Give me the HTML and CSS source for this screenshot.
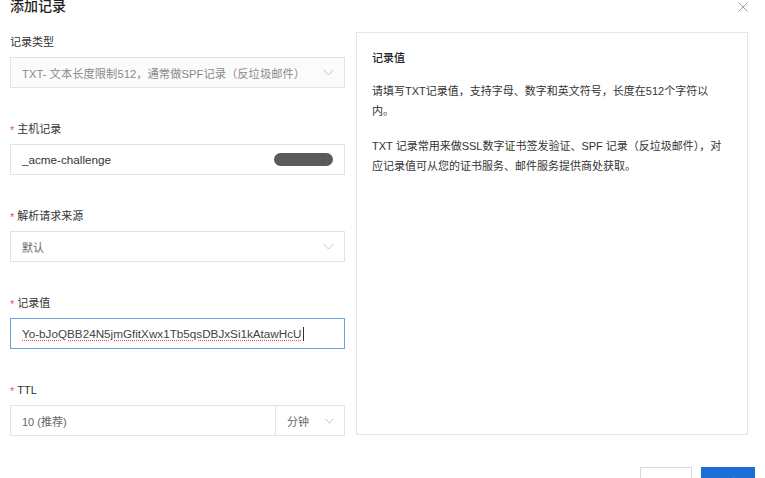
FILE: index.html
```html
<!DOCTYPE html>
<html lang="zh-CN">
<head>
<meta charset="utf-8">
<title>添加记录</title>
<link rel="stylesheet" href="styles.css">
</head>
<body>
<div class="dialog">
  <div class="header">
    <div class="title">添加记录</div>
    <svg class="close" width="10" height="10" viewBox="0 0 10 10"><path d="M0.5 0.5 L9.5 9.5 M9.5 0.5 L0.5 9.5" stroke="#a0a0a0" stroke-width="1" fill="none"/></svg>
  </div>
  <div class="content">
    <div class="form">
      <div class="field">
        <div class="label">记录类型</div>
        <div class="control select disabled">
          <span class="value muted">TXT- 文本长度限制512，通常做SPF记录（反垃圾邮件）</span>
          <svg class="chev" width="11" height="7" viewBox="0 0 11 7"><path d="M0.5 0.8 L5.5 6 L10.5 0.8" stroke="#c4c4c4" stroke-width="1" fill="none"/></svg>
        </div>
      </div>
      <div class="field">
        <div class="label"><span class="req">*</span>主机记录</div>
        <div class="control">
          <span class="value">_acme-challenge</span>
          <span class="redact"></span>
        </div>
      </div>
      <div class="field">
        <div class="label"><span class="req">*</span>解析请求来源</div>
        <div class="control select">
          <span class="value gray">默认</span>
          <svg class="chev" width="11" height="7" viewBox="0 0 11 7"><path d="M0.5 0.8 L5.5 6 L10.5 0.8" stroke="#c4c4c4" stroke-width="1" fill="none"/></svg>
        </div>
      </div>
      <div class="field">
        <div class="label"><span class="req">*</span>记录值</div>
        <div class="control focused">
          <span class="value spell">Yo-bJoQBB24N5jmGfitXwx1Tb5qsDBJxSi1kAtawHcU</span><span class="caret"></span>
        </div>
      </div>
      <div class="field last">
        <div class="label"><span class="req">*</span>TTL</div>
        <div class="ttl">
          <div class="control ttl-num"><span class="value gray">10 (推荐)</span></div>
          <div class="control select ttl-unit">
            <span class="value gray">分钟</span>
            <svg class="chev" width="9" height="6" viewBox="0 0 9 6"><path d="M0.5 0.8 L4.5 5.2 L8.5 0.8" stroke="#c4c4c4" stroke-width="1" fill="none"/></svg>
          </div>
        </div>
      </div>
    </div>
    <div class="panel">
      <div class="panel-title">记录值</div>
      <p>请填写TXT记录值，支持字母、数字和英文符号，长度在512个字符以内。</p>
      <p>TXT 记录常用来做SSL数字证书签发验证、SPF 记录（反垃圾邮件），对应记录值可从您的证书服务、邮件服务提供商处获取。</p>
    </div>
  </div>
  <div class="footer">
    <div class="btn">取消</div>
    <div class="btn primary">确定</div>
  </div>
</div>
</body>
</html>
```

FILE: styles.css
```css
* { box-sizing: border-box; }
html, body {
  margin: 0;
  padding: 0;
  width: 765px;
  height: 478px;
  overflow: hidden;
  background: #ffffff;
}
body {
  font-family: "Liberation Sans", "Noto Sans CJK SC", sans-serif;
  color: #333333;
}
.dialog {
  padding: 0 10px;
}
.header {
  display: flex;
  align-items: flex-start;
  justify-content: space-between;
  height: 32px;
  padding-right: 7px;
}
.title {
  font-size: 14px;
  line-height: 14px;
  margin-top: -1px;
  font-weight: 500;
  color: #1f1f1f;
}
.close {
  margin-top: 2px;
  display: block;
}
.content {
  display: flex;
  gap: 11px;
  padding-right: 7px;
  height: 403px;
}
.form {
  width: 335px;
  padding-top: 1px;
}
.field {
  margin-bottom: 32px;
}
.field.last { margin-bottom: 0; }
.label {
  font-size: 11px;
  line-height: 18px;
  height: 18px;
  margin-bottom: 6px;
  color: #333333;
  display: flex;
  align-items: center;
}
.req {
  color: #e25555;
  font-size: 11px;
  margin-right: 3px;
  position: relative;
  top: 1px;
}
.control {
  height: 31px;
  border: 1px solid #e3e3e3;
  background: #ffffff;
  display: flex;
  align-items: center;
  padding: 0 10px 0 11px;
  font-size: 11.7px;
}
.control.disabled {
  background: #fbfbfb;
}
.select {
  justify-content: space-between;
}
.value {
  white-space: nowrap;
  color: #333333;
}
.value.muted {
  color: #8a8a8a;
  font-size: 11.3px;
}
.value.gray {
  color: #666666;
  font-size: 11px;
}
.chev { display: block; }
.redact {
  margin-left: auto;
  width: 59px;
  height: 13px;
  border-radius: 7px;
  background: #5a5a5a;
  margin-right: 1px;
}
.focused {
  border-color: #6aa3dc;
}
.spell {
  text-decoration: underline dotted #e05a5a;
  text-underline-offset: 2px;
  color: #444444;
}
.caret {
  display: inline-block;
  width: 1px;
  height: 14px;
  background: #333333;
  margin-left: 1px;
}
.ttl {
  display: flex;
}
.ttl-num {
  flex: 1;
  border-right: none;
}
.ttl-unit {
  width: 70px;
  padding: 0 10px 0 11px;
}
.panel {
  flex: 1;
  border: 1px solid #e6e6e6;
  padding: 15px 18px 0 15px;
  font-size: 11px;
  color: #333333;
}
.panel-title {
  line-height: 20px;
  font-weight: 500;
  color: #222222;
  margin-bottom: 13px;
}
.panel p {
  margin: 0 0 15px 0;
  line-height: 20px;
}
.footer {
  display: flex;
  justify-content: flex-end;
  gap: 9px;
  margin-right: -10px;
  padding-right: 10px;
  margin-top: 32px;
}
.btn {
  width: 52px;
  height: 36px;
  border: 1px solid #d9d9d9;
  background: #ffffff;
  font-size: 12px;
  line-height: 34px;
  text-align: center;
  color: #333333;
}
.btn.primary {
  width: 54px;
  background: #1b6fd6;
  border-color: #1b6fd6;
  color: #ffffff;
}
```
